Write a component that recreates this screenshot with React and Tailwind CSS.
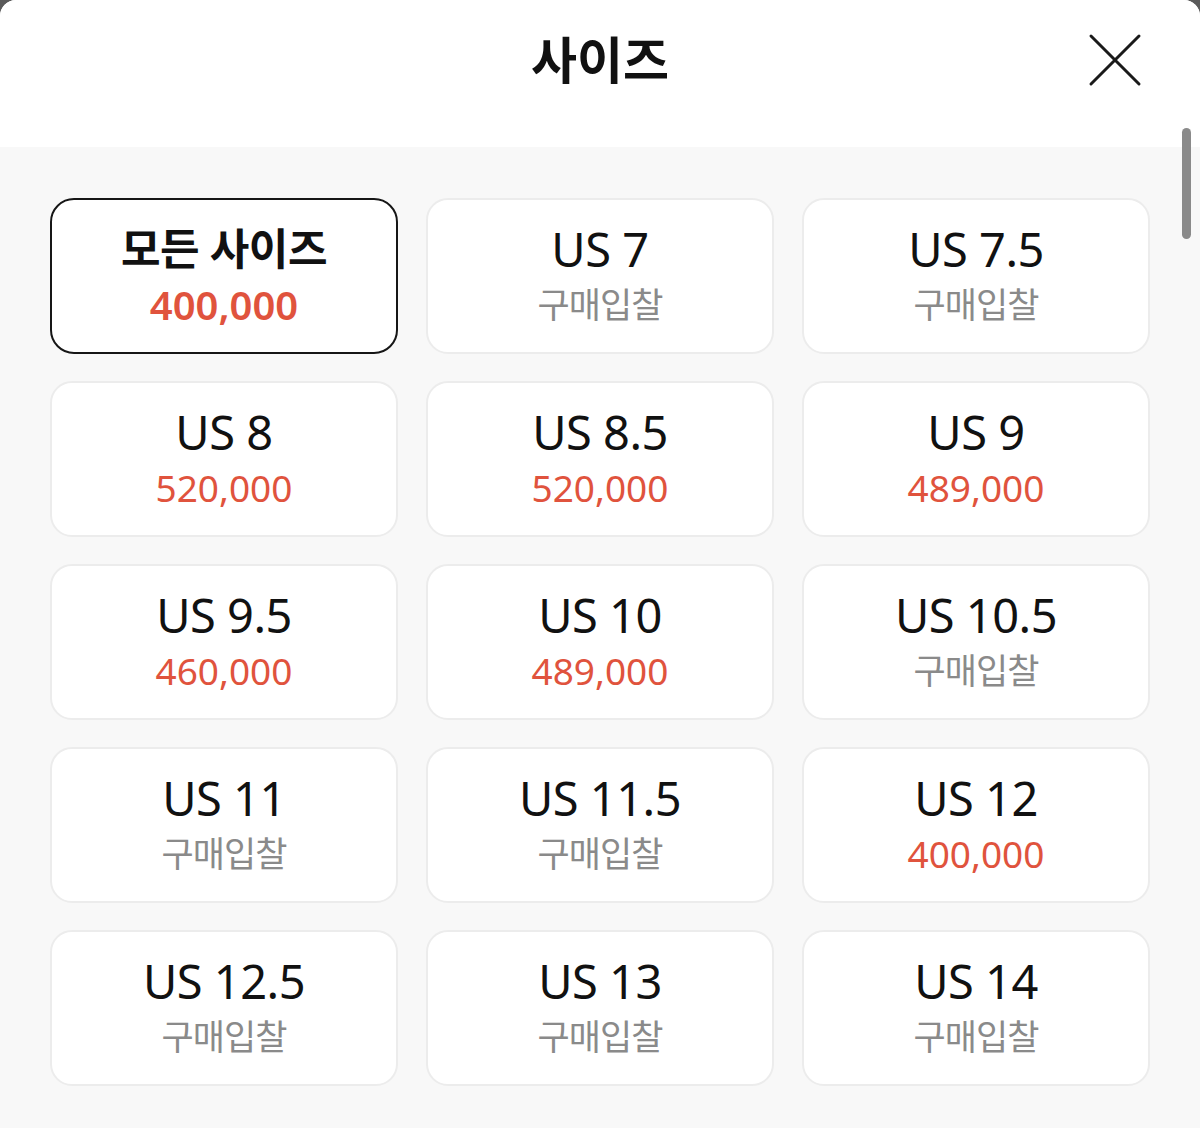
import React from 'react';

const sizes = [
    { label: '모든 사이즈', price: '400,000', selected: true },
    { label: 'US 7' },
    { label: 'US 7.5' },
    { label: 'US 8', price: '520,000' },
    { label: 'US 8.5', price: '520,000' },
    { label: 'US 9', price: '489,000' },
    { label: 'US 9.5', price: '460,000' },
    { label: 'US 10', price: '489,000' },
    { label: 'US 10.5' },
    { label: 'US 11' },
    { label: 'US 11.5' },
    { label: 'US 12', price: '400,000' },
    { label: 'US 12.5' },
    { label: 'US 13' },
    { label: 'US 14' },
];

const font = { fontFamily: '"Noto Sans", "Noto Sans CJK KR", sans-serif' };

const SizeCard = ({ label, price, selected }) => (
    <div
        className={`h-[156px] bg-white flex flex-col items-center justify-center pt-[2px] ${selected
                ? 'border-[2.5px] border-[#161616] rounded-[24px]'
                : 'border-2 border-[#ececec] rounded-[22px]'
            }`}
    >
        {selected ? (
            <>
                <div className="text-[43px] leading-[56px] font-bold text-[#111] tracking-[-0.5px]">{label}</div>
                <div className="text-[40px] leading-[56px] font-semibold text-[#e0533d]">{price}</div>
            </>
        ) : (
            <>
                <div className="text-[47px] leading-[56px] text-[#111] tracking-[-0.5px]">{label}</div>
                {price ? (
                    <div className="text-[37px] leading-[56px] text-[#e0533d]">{price}</div>
                ) : (
                    <div className="text-[35px] leading-[56px] text-[#8a8a8a] tracking-[-1px]">구매입찰</div>
                )}
            </>
        )}
    </div>
);

export default function App() {
    return (
        <div className="w-[1200px] h-[1128px] bg-[#5a5a5a] overflow-hidden" style={font}>
            <div className="relative h-full bg-[#f8f8f8] rounded-tl-[16px] rounded-tr-[16px] overflow-hidden">
                {/* Header */}
                <div className="h-[147px] bg-white flex items-start justify-center pt-[20px] relative">
                    <h2 className="text-[50px] leading-[80px] font-bold text-[#111]">사이즈</h2>
                    <button className="absolute left-[1088px] top-[33px] w-[54px] h-[54px]">
                        <svg viewBox="0 0 54 54" width="54" height="54" fill="none" stroke="#1a1a1a" strokeWidth="3" strokeLinecap="round">
                            <path d="M3 3 L51 51 M51 3 L3 51" />
                        </svg>
                    </button>
                </div>

                {/* Scrollbar */}
                <div className="absolute left-[1182px] top-[128px] w-[9px] h-[111px] rounded-full bg-[#8a8a8a]"></div>

                {/* Grid */}
                <div className="grid grid-cols-3 gap-x-[28px] gap-y-[27px] px-[50px] pt-[51px]">
                    {sizes.map((s) => (
                        <SizeCard key={s.label} {...s} />
                    ))}
                </div>
            </div>
        </div>
    );
}
